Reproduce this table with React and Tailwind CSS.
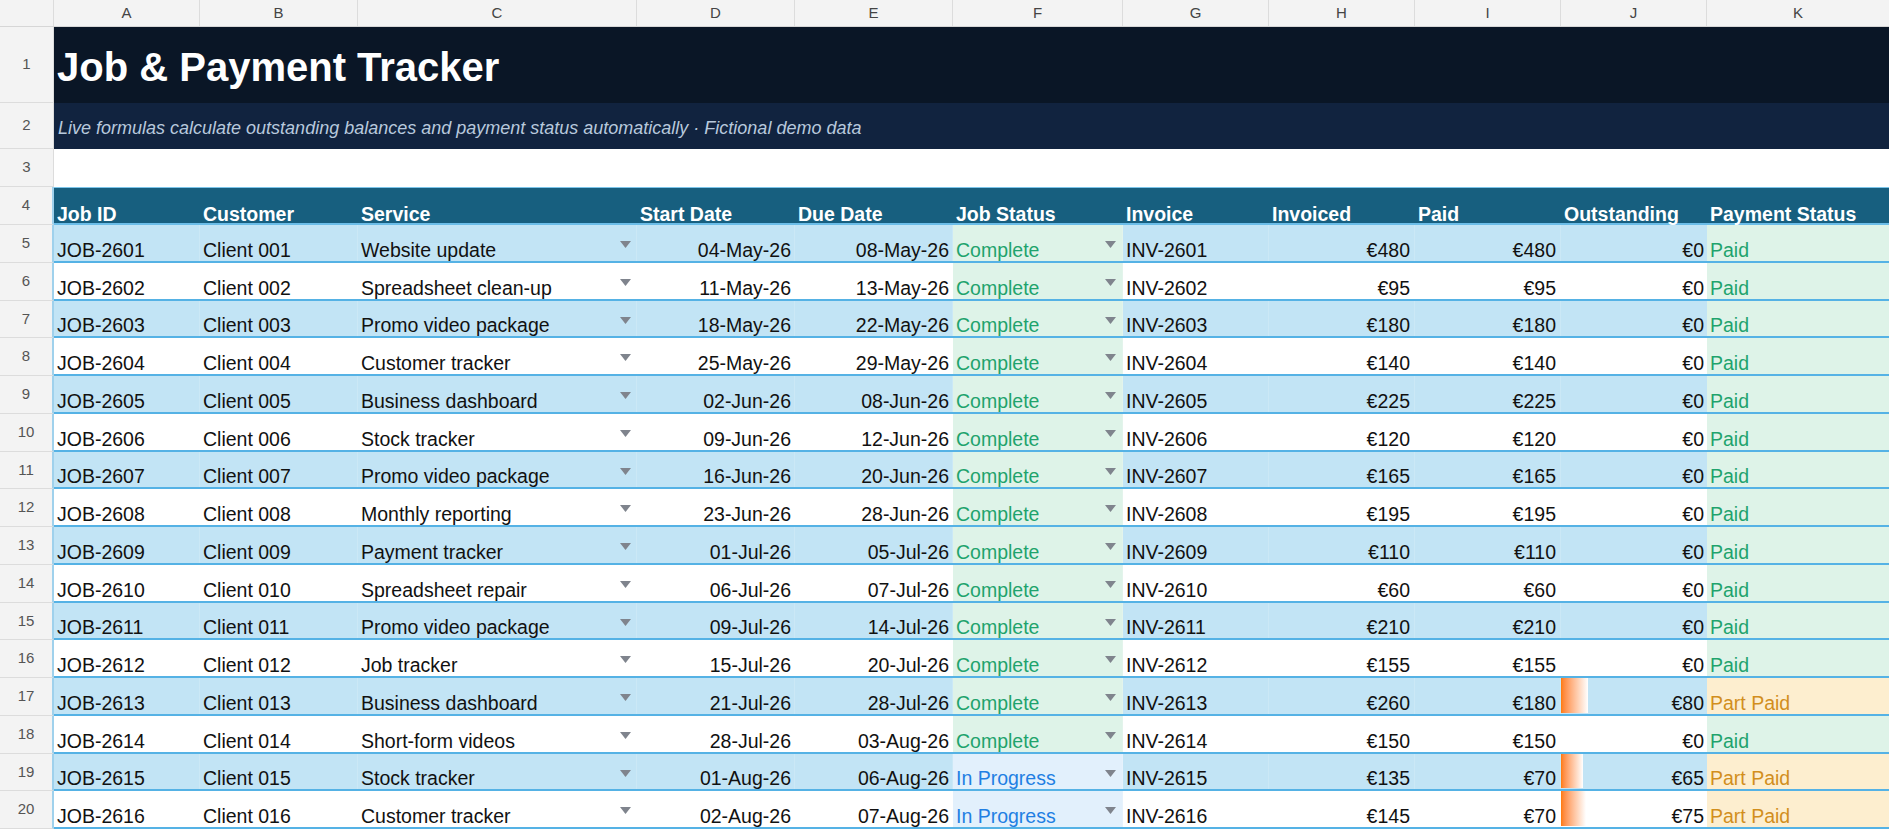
import React from "react";

const COLS = [
  { k: "A", w: "w-[146px]" },
  { k: "B", w: "w-[158px]" },
  { k: "C", w: "w-[279px]" },
  { k: "D", w: "w-[158px]" },
  { k: "E", w: "w-[158px]" },
  { k: "F", w: "w-[170px]" },
  { k: "G", w: "w-[146px]" },
  { k: "H", w: "w-[146px]" },
  { k: "I", w: "w-[146px]" },
  { k: "J", w: "w-[146px]" },
  { k: "K", w: "w-[183px]" },
];

const DATA = [
  ["JOB-2601", "Client 001", "Website update", "04-May-26", "08-May-26", "Complete", "INV-2601", 480, 480, "Paid"],
  ["JOB-2602", "Client 002", "Spreadsheet clean-up", "11-May-26", "13-May-26", "Complete", "INV-2602", 95, 95, "Paid"],
  ["JOB-2603", "Client 003", "Promo video package", "18-May-26", "22-May-26", "Complete", "INV-2603", 180, 180, "Paid"],
  ["JOB-2604", "Client 004", "Customer tracker", "25-May-26", "29-May-26", "Complete", "INV-2604", 140, 140, "Paid"],
  ["JOB-2605", "Client 005", "Business dashboard", "02-Jun-26", "08-Jun-26", "Complete", "INV-2605", 225, 225, "Paid"],
  ["JOB-2606", "Client 006", "Stock tracker", "09-Jun-26", "12-Jun-26", "Complete", "INV-2606", 120, 120, "Paid"],
  ["JOB-2607", "Client 007", "Promo video package", "16-Jun-26", "20-Jun-26", "Complete", "INV-2607", 165, 165, "Paid"],
  ["JOB-2608", "Client 008", "Monthly reporting", "23-Jun-26", "28-Jun-26", "Complete", "INV-2608", 195, 195, "Paid"],
  ["JOB-2609", "Client 009", "Payment tracker", "01-Jul-26", "05-Jul-26", "Complete", "INV-2609", 110, 110, "Paid"],
  ["JOB-2610", "Client 010", "Spreadsheet repair", "06-Jul-26", "07-Jul-26", "Complete", "INV-2610", 60, 60, "Paid"],
  ["JOB-2611", "Client 011", "Promo video package", "09-Jul-26", "14-Jul-26", "Complete", "INV-2611", 210, 210, "Paid"],
  ["JOB-2612", "Client 012", "Job tracker", "15-Jul-26", "20-Jul-26", "Complete", "INV-2612", 155, 155, "Paid"],
  ["JOB-2613", "Client 013", "Business dashboard", "21-Jul-26", "28-Jul-26", "Complete", "INV-2613", 260, 180, "Part Paid"],
  ["JOB-2614", "Client 014", "Short-form videos", "28-Jul-26", "03-Aug-26", "Complete", "INV-2614", 150, 150, "Paid"],
  ["JOB-2615", "Client 015", "Stock tracker", "01-Aug-26", "06-Aug-26", "In Progress", "INV-2615", 135, 70, "Part Paid"],
  ["JOB-2616", "Client 016", "Customer tracker", "02-Aug-26", "07-Aug-26", "In Progress", "INV-2616", 145, 70, "Part Paid"],
];

const HEADERS = [
  "Job ID",
  "Customer",
  "Service",
  "Start Date",
  "Due Date",
  "Job Status",
  "Invoice",
  "Invoiced",
  "Paid",
  "Outstanding",
  "Payment Status",
];

function Tri() {
  return (
    <svg width="11" height="7" viewBox="0 0 11 7" className="shrink-0 self-start mt-[16px]">
      <polygon points="0,0 11,0 5.5,7" fill="#7f848d" />
    </svg>
  );
}

function RowNum({ n, blue }) {
  return (
    <div
      className={
        blue
          ? "w-[54px] shrink-0 flex items-center justify-center bg-[#f3f3f3] border-b border-b-[#dcdcdc] border-r-2 border-r-[#9fd1ec] text-[15px] text-[#555]"
          : "w-[54px] shrink-0 flex items-center justify-center bg-[#f3f3f3] border-b border-b-[#dcdcdc] border-r border-r-[#dcdcdc] text-[15px] text-[#555]"
      }
    >
      {n}
    </div>
  );
}

function DataRow({ n, d }) {
  const band = n % 2 === 1;
  const [job, client, service, start, due, status, inv, invoiced, paid, pstatus] = d;
  const out = invoiced - paid;
  const rowCls = band
    ? "flex flex-1 border-b-2 border-[#55b2e5] bg-[#c2e4f5]"
    : "flex flex-1 border-b-2 border-[#55b2e5] bg-white";
  const cell = "shrink-0 flex items-end px-[3px] pb-0 leading-[22px] border-r border-r-white/15 whitespace-nowrap";
  const complete = status === "Complete";
  const isPaid = pstatus === "Paid";
  return (
    <div className="flex h-[37.75px]">
      <RowNum n={n} blue />
      <div className={rowCls}>
        <div className={`${cell} w-[146px]`}>{job}</div>
        <div className={`${cell} w-[158px]`}>{client}</div>
        <div className={`${cell} w-[279px] justify-between pr-[5px]`}>
          <span>{service}</span>
          <Tri />
        </div>
        <div className={`${cell} w-[158px] justify-end`}>{start}</div>
        <div className={`${cell} w-[158px] justify-end`}>{due}</div>
        <div
          className={
            complete
              ? `${cell} w-[170px] justify-between pr-[6px] bg-[#def3e8] text-[#1fa36d]`
              : `${cell} w-[170px] justify-between pr-[6px] bg-[#e2f0fc] text-[#1f7fe3]`
          }
        >
          <span>{status}</span>
          <Tri />
        </div>
        <div className={`${cell} w-[146px]`}>{inv}</div>
        <div className={`${cell} w-[146px] justify-end pr-[4px]`}>€{invoiced}</div>
        <div className={`${cell} w-[146px] justify-end pr-[4px]`}>€{paid}</div>
        <div className="shrink-0 w-[146px] flex items-stretch pr-[3px] pb-[1px] leading-[22px] whitespace-nowrap">
          {out > 0 ? (
            <div
              className="shrink-0 bg-linear-to-r from-[#ff7a00] to-white"
              style={{ width: `${out * 0.335}px` }}
            />
          ) : null}
          <span className="ml-auto self-end mb-[-1px]">€{out}</span>
        </div>
        <div
          className={
            isPaid
              ? `${cell} w-[183px] bg-[#def3e8] text-[#1fa36d]`
              : `${cell} w-[183px] bg-[#fdeecf] text-[#d28e1d]`
          }
        >
          {pstatus}
        </div>
      </div>
    </div>
  );
}

export default function App() {
  return (
    <div
      className="w-[1889px] h-[830px] overflow-hidden bg-white text-[#111] text-[19.5px]"
      style={{ fontFamily: '"Liberation Sans", Arial, sans-serif' }}
    >
      {/* column letters */}
      <div className="flex h-[27px] bg-[#f3f3f3] border-b border-[#d6d6d6]">
        <div className="w-[54px] shrink-0 border-r border-[#dcdcdc]" />
        {COLS.map((c) => (
          <div
            key={c.k}
            className={`${c.w} shrink-0 flex items-center justify-center border-r border-[#dcdcdc] text-[15px] text-[#444]`}
          >
            {c.k}
          </div>
        ))}
      </div>

      {/* row 1 */}
      <div className="flex h-[76px]">
        <RowNum n={1} />
        <div className="flex-1 flex items-end pl-[3px] pb-[14px] bg-[#0a1626] text-white font-bold text-[40px] leading-[44px]">
          Job &amp; Payment Tracker
        </div>
      </div>

      {/* row 2 */}
      <div className="flex h-[46px]">
        <RowNum n={2} />
        <div className="flex-1 flex items-end pl-[4px] pb-[11px] bg-[#11233f] text-[#b8c9dd] italic text-[18px] leading-[20px]">
          Live formulas calculate outstanding balances and payment status automatically · Fictional demo data
        </div>
      </div>

      {/* row 3 */}
      <div className="flex h-[38px]">
        <RowNum n={3} />
        <div className="flex-1 bg-white" />
      </div>

      {/* row 4 header */}
      <div className="flex h-[38px]">
        <RowNum n={4} blue />
        <div className="flex flex-1 bg-[#175f7f] border-t border-t-[#7cc5ea] border-b-2 border-b-[#6bbde8]">
          {HEADERS.map((h, i) => (
            <div
              key={h}
              className={`${COLS[i].w} shrink-0 flex items-end px-[3px] pb-0 leading-[18px] text-white font-bold whitespace-nowrap`}
            >
              {h}
            </div>
          ))}
        </div>
      </div>

      {DATA.map((d, i) => (
        <DataRow key={d[0]} n={i + 5} d={d} />
      ))}
    </div>
  );
}
